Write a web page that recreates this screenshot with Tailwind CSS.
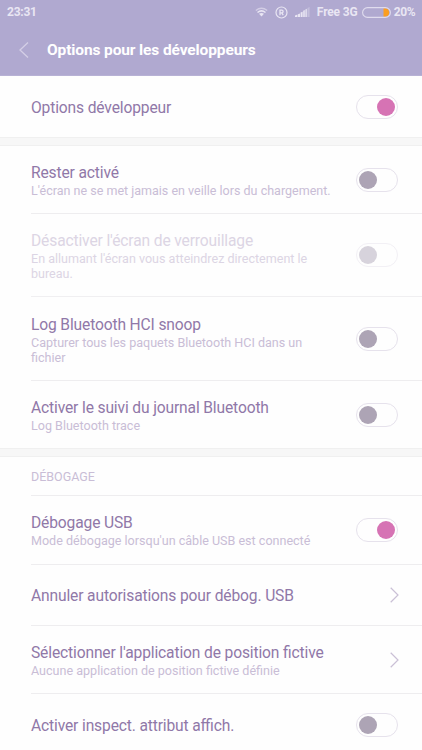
<!DOCTYPE html>
<html lang="fr">
<head>
<meta charset="utf-8">
<title>Options pour les développeurs</title>
<script src="https://cdn.jsdelivr.net/npm/@tailwindcss/browser@4"></script>
</head>
<body class="bg-[#fefefe]">
<div class="w-[422px] h-[750px] overflow-hidden font-['Roboto','Noto_Sans',sans-serif] text-[#9078a8] [font-feature-settings:'liga']">
<header class="h-[76px] bg-[#b0a9d0] text-white border-b border-[#b8b2d5]">
  <div class="h-6 flex items-center pl-[7px] pr-[7px] text-[12px] tracking-[-0.15px] font-bold text-[#e9e6f3]">
    <span class="font-bold tracking-[-0.25px]">23:31</span>
    <svg class="ml-auto" width="13" height="10" viewBox="0 0 13 10" fill="none" stroke="#e9e6f3"><path d="M.8 3.5Q6.5-1 12.2 3.5" stroke-width="1.3" opacity=".6"/><path d="M2.5 5.5Q6.5 2.2 10.5 5.5" stroke-width="1.5"/><path d="M4 6.8Q6.5 5 9 6.8L6.5 9.4Z" fill="#e9e6f3" stroke="none"/></svg>
    <svg class="ml-[7px]" width="13" height="13" viewBox="0 0 13 13" fill="none" stroke="#e9e6f3"><circle cx="6.5" cy="6.5" r="5.5" stroke-width="1.2"/><path d="M5 9.2V4.2h1.8a1.2 1.2 0 0 1 0 2.6H5M6.8 6.8 8.2 9.2" stroke-width="1.3"/></svg>
    <svg class="ml-[7px]" width="15" height="10" viewBox="0 0 15 10" fill="#e9e6f3"><path d="M0 8.5 2.5 7.6V10H0zM3 7.2l2-.8V10H3zM5.6 5.6l2-.8V10h-2zM8.2 3.7l1.6-.8V10H8.2zM10.4 2.4l1.4-.7V10h-1.4z"/><path opacity=".35" d="M12.4 1 14.6 0v10h-2.2z"/></svg>
    <span class="ml-[7px] w-10 whitespace-nowrap">Free 3G</span>
    <svg class="ml-[5px]" width="29" height="11" viewBox="0 0 29 11"><path d="M21.5 1.2h1.5a4.3 4.3 0 0 1 0 8.6h-1.5z" fill="#fb9e20"/><rect x=".6" y=".6" width="27.8" height="9.8" rx="4.9" fill="none" stroke="#e0dcee" stroke-width="1.1"/></svg>
    <span class="ml-[3px] text-[12px] tracking-[-0.5px]">20%</span>
  </div>
  <div class="h-[52px] flex items-center pl-[19px]">
    <svg width="10" height="16" viewBox="0 0 10 16" fill="none" stroke="#d4cfe6" stroke-width="1.3"><path d="M9 .5 1 8l8 7.5"/></svg>
    <h1 class="ml-[18px] pt-0.5 text-[15.5px] tracking-[-0.12px] font-bold">Options pour les développeurs</h1>
  </div>
</header>
<main>
  <section class="h-[61px] pl-[31px] pr-6 flex items-center justify-between">
    <h2 class="pt-0.5 text-[15.6px] tracking-[-0.14px] leading-5">Options développeur</h2>
    <span class="w-[42px] h-6 rounded-full border border-[#e6e2ec] flex items-center justify-end px-[2px]"><i class="size-[18px] rounded-full bg-[#d673b4]"></i></span>
  </section>
  <div class="h-[9px] bg-[#f7f7f7] border-y border-[#f0f0f0]"></div>
  <section class="pl-[31px]">
    <div class="h-[68px] pr-6 flex items-center justify-between border-b border-[#eeedef]">
      <div class="pt-0.5"><h2 class="text-[15.6px] tracking-[-0.14px] leading-5">Rester activé</h2><p class="text-[12.52px] leading-[15px] text-[#c9bdd6]">L'écran ne se met jamais en veille lors du chargement.</p></div>
      <span class="shrink-0 w-[42px] h-6 rounded-full border border-[#e6e2ec] flex items-center px-[2px]"><i class="size-[18px] rounded-full bg-[#ada4b5]"></i></span>
    </div>
    <div class="h-[83px] pr-6 flex items-center justify-between border-b border-[#f0eff1]">
      <div class="pt-0.5 text-[#dcd5e4]"><h2 class="text-[15.6px] tracking-[-0.14px] leading-5">Désactiver l'écran de verrouillage</h2><p class="text-[12.55px] leading-[15px]">En allumant l'écran vous atteindrez directement le<br>bureau.</p></div>
      <span class="shrink-0 w-[42px] h-6 rounded-full border border-[#f2f0f5] flex items-center px-[2px]"><i class="size-[18px] rounded-full bg-[#d7d3dc]"></i></span>
    </div>
    <div class="h-[84px] pr-6 flex items-center justify-between border-b border-[#eeedef]">
      <div class="pt-0.5"><h2 class="text-[15.6px] tracking-[-0.14px] leading-5">Log Bluetooth HCI snoop</h2><p class="text-[12.55px] leading-[15px] text-[#c9bdd6]">Capturer tous les paquets Bluetooth HCI dans un<br>fichier</p></div>
      <span class="shrink-0 w-[42px] h-6 rounded-full border border-[#e6e2ec] flex items-center px-[2px]"><i class="size-[18px] rounded-full bg-[#ada4b5]"></i></span>
    </div>
    <div class="h-[67px] pr-6 flex items-center justify-between">
      <div class="pt-px"><h2 class="text-[15.6px] tracking-[-0.14px] leading-5">Activer le suivi du journal Bluetooth</h2><p class="text-[12.55px] leading-[15px] text-[#c9bdd6]">Log Bluetooth trace</p></div>
      <span class="shrink-0 w-[42px] h-6 rounded-full border border-[#e6e2ec] flex items-center px-[2px]"><i class="size-[18px] rounded-full bg-[#ada4b5]"></i></span>
    </div>
  </section>
  <div class="h-[9px] bg-[#f7f7f7] border-y border-[#f0f0f0]"></div>
  <section class="pl-[31px]">
    <h3 class="h-[39px] pt-0.5 flex items-center border-b border-[#eeedef] text-[12.5px] text-[#c9bdd6]">DÉBOGAGE</h3>
    <div class="h-[69px] pr-6 flex items-center justify-between border-b border-[#eeedef]">
      <div class="pt-px"><h2 class="text-[15.6px] tracking-[-0.14px] leading-5">Débogage USB</h2><p class="text-[12.55px] leading-[15px] text-[#c9bdd6]">Mode débogage lorsqu'un câble USB est connecté</p></div>
      <span class="shrink-0 w-[42px] h-6 rounded-full border border-[#e6e2ec] flex items-center justify-end px-[2px]"><i class="size-[18px] rounded-full bg-[#d673b4]"></i></span>
    </div>
    <div class="h-[61px] pr-[23px] flex items-center justify-between border-b border-[#eeedef]">
      <h2 class="pt-0.5 text-[15.6px] tracking-[-0.14px] leading-5">Annuler autorisations pour débog. USB</h2>
      <svg width="9" height="16" viewBox="0 0 9 16" fill="none" stroke="#cac0d6" stroke-width="1.2"><path d="M.7.8 8 8 .7 15.2"/></svg>
    </div>
    <div class="h-[68px] pr-[23px] flex items-center justify-between border-b border-[#eeedef]">
      <div class="pt-0.5"><h2 class="text-[15.6px] tracking-[-0.14px] leading-5">Sélectionner l'application de position fictive</h2><p class="text-[12.55px] leading-[15px] text-[#c9bdd6]">Aucune application de position fictive définie</p></div>
      <svg width="9" height="16" viewBox="0 0 9 16" fill="none" stroke="#cac0d6" stroke-width="1.2"><path d="M.7.8 8 8 .7 15.2"/></svg>
    </div>
    <div class="h-[61px] pr-6 flex items-center justify-between">
      <h2 class="pt-0.5 text-[15.6px] tracking-[-0.14px] leading-5">Activer inspect. attribut affich.</h2>
      <span class="shrink-0 w-[42px] h-6 rounded-full border border-[#e6e2ec] flex items-center px-[2px]"><i class="size-[18px] rounded-full bg-[#ada4b5]"></i></span>
    </div>
  </section>
</main>
</div>
</body>
</html>
